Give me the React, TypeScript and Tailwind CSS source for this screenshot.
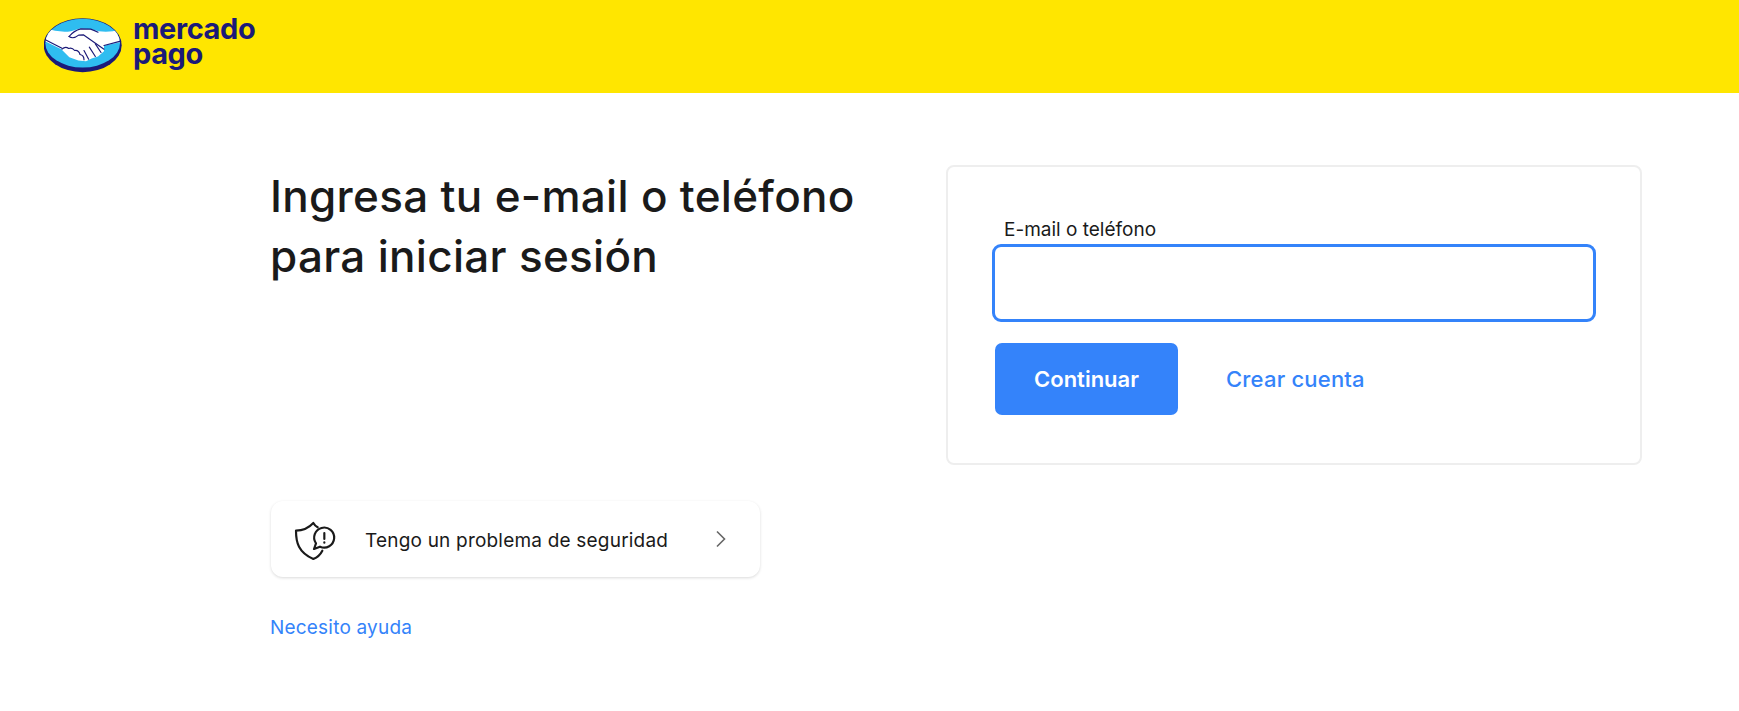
export default function App() {
  return (
    <div className="min-h-[711px] bg-white font-['Inter',sans-serif] text-[#1a1a1a]">
      <header className="flex h-[93px] items-start bg-[#ffe600] pl-[44px] pt-[17px]">
        <svg viewBox="132 50 240 170" className="h-[57px] w-[80px] shrink-0">
          <defs>
            <clipPath id="mp-oval">
              <ellipse cx="248" cy="128" rx="112" ry="73" />
            </clipPath>
          </defs>
          <ellipse cx="248" cy="134" rx="117" ry="81" fill="#1b1a78" />
          <ellipse cx="248" cy="128" rx="112" ry="73" fill="#2fbdf0" />
          <g clipPath="url(#mp-oval)">
            <path
              d="M130 80 Q175 98 213 92 L240 84 L275 86 Q320 102 365 84 L365 124 L312 136 L312 152 L294 168 L275 174 L258 182 L235 180 L208 170 L184 146 L130 120 Z"
              fill="#fff"
            />
          </g>
          <g fill="none" stroke="#1b1a78" strokeWidth="3.5" strokeLinecap="round" strokeLinejoin="round">
            <path d="M207 108 Q222 90 242 85 L272 86 Q284 90 294 95" />
            <path d="M207 108 Q220 117 236 104 L250 103 L312 146" />
            <path d="M286 130 L303 156 M268 140 L286 168 M252 150 L266 176" />
            <path d="M186 146 Q196 136 206 144 Q216 140 224 150 Q236 148 240 162 Q252 164 252 178" />
            <path d="M312 135 L362 122 M136 118 L186 143" />
          </g>
        </svg>
        <div className="ml-[9px] mt-[-1px] font-['Inter',sans-serif] text-[29px] font-bold leading-[25px] tracking-[-0.4px] text-[#1b1a78]">
          <div>mercado</div>
          <div>pago</div>
        </div>
      </header>
      <main className="flex pl-[270px] pt-[72px]">
        <div className="w-[676px] shrink-0">
          <h1 className="h-[336px] pt-[1px] text-[44px] font-medium leading-[60px] tracking-[0.3px] text-[#1a1a1a]">
            Ingresa tu e-mail o teléfono
            <br />
            para iniciar sesión
          </h1>
          <a className="ml-[1px] flex h-[76px] w-[489px] items-center rounded-[12px] bg-white shadow-[0_1px_3px_rgba(0,0,0,0.15)]">
            <svg viewBox="0 0 180 180" className="ml-[14px] h-[60px] w-[60px] shrink-0" fill="none" stroke="#1a1a1a" strokeWidth="6.5" strokeLinecap="round" strokeLinejoin="round">
              <path d="M98 55 Q90 51 85 42 C70 58 50 65 33 65 C33 100 40 130 85 150 C97 145 107 135 112 125" />
              <path d="M87 120 L93 103 A30 30 0 1 1 105 113 Z" />
              <path d="M118 72 V90" />
              <path d="M118 100 V101" />
            </svg>
            <span className="ml-[20px] mt-[2px] text-[19px] leading-none tracking-[0.2px]">Tengo un problema de seguridad</span>
            <svg viewBox="0 0 12 18" className="ml-[47px] h-[18px] w-[12px] shrink-0" fill="none" stroke="#666" strokeWidth="1.6">
              <path d="M2 1.5 L9.5 9 L2 16.5" />
            </svg>
          </a>
          <a className="mt-[40px] block text-[19px] leading-[22px] tracking-[0.2px] text-[#3483fa]">Necesito ayuda</a>
        </div>
        <section className="h-[300px] w-[696px] shrink-0 rounded-[8px] border-2 border-[#eeeeee] px-[47px] pt-[50px]">
          <label className="block pl-[9px] text-[19px] leading-[26px]">E-mail o teléfono</label>
          <input className="ml-[-3px] mt-[1px] block h-[78px] w-[604px] rounded-[9px] border-[3px] border-[#3483fa] outline-none" />
          <div className="mt-[21px] flex items-center">
            <button className="h-[72px] w-[183px] rounded-[7px] bg-[#3483fa] text-[22px] font-semibold text-white">Continuar</button>
            <a className="ml-[48px] text-[22px] font-medium tracking-[0.2px] text-[#3483fa]">Crear cuenta</a>
          </div>
        </section>
      </main>
    </div>
  );
}
